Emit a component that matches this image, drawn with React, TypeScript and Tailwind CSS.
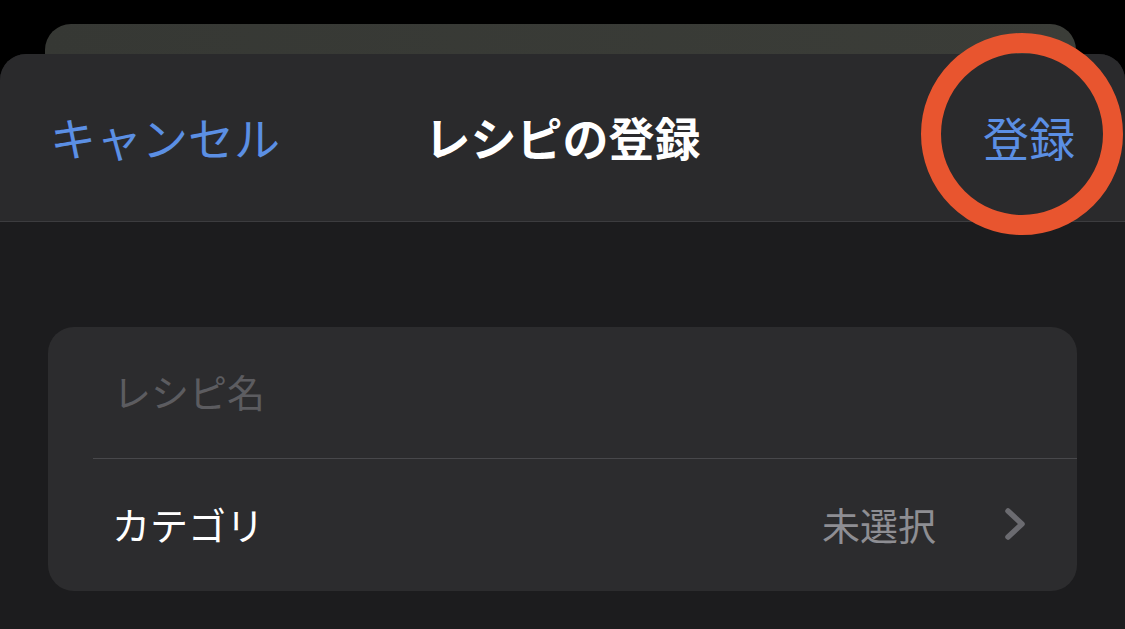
export default function App() {
  return (
    <div
      className="relative h-[629px] w-full overflow-hidden bg-black pt-[24px]"
      style={{ fontFamily: '"Noto Sans CJK JP", "Noto Sans", sans-serif' }}
    >
      {/* Back sheet peeking out */}
      <div className="ml-[45px] mr-[49px] h-[30px] rounded-t-[26px] bg-gradient-to-r from-[#363834] to-[#3b3d38]" />

      {/* Front sheet */}
      <div className="h-[575px] rounded-t-[26px] bg-[#1c1c1e] overflow-hidden">
        {/* Nav header */}
        <div className="grid h-[168px] grid-cols-[1fr_auto_1fr] items-center border-b border-[#3c3c3f] bg-[#2a2a2c] px-[50px] pb-[3px]">
          <span className="justify-self-start text-[46px] leading-none text-[#5b8fe4]">キャンセル</span>
          <span className="text-[46px] font-bold leading-none text-white">レシピの登録</span>
          <span className="justify-self-end text-[46px] leading-none text-[#5b8fe4]">登録</span>
        </div>

        {/* Form card */}
        <div className="mx-[48px] mt-[105px] overflow-hidden rounded-[26px] bg-[#2c2c2e]">
          <div className="flex h-[131px] items-center pb-[3px] pl-[65px]">
            <span className="text-[38px] leading-none text-[#5c5c60]">レシピ名</span>
          </div>
          <div className="ml-[45px] h-px bg-[#48484b]" />
          <div className="flex h-[132px] items-center justify-between pb-[3px] pl-[64px] pr-[51px]">
            <span className="text-[38px] leading-none text-white">カテゴリ</span>
            <div className="flex items-center gap-[68px]">
              <span className="text-[38px] leading-none text-[#8e8e93]">未選択</span>
              <svg width="22" height="34" viewBox="0 0 22 34" fill="none">
                <path
                  d="M4 4 L18 17 L4 30"
                  stroke="#6b6b70"
                  strokeWidth="5.5"
                  strokeLinecap="round"
                  strokeLinejoin="round"
                />
              </svg>
            </div>
          </div>
        </div>
      </div>

      {/* Highlight ring around the register button */}
      <div className="absolute left-[921px] top-[33px] h-[202px] w-[202px] rounded-full border-[20px] border-[#e8552f]" />
    </div>
  );
}
